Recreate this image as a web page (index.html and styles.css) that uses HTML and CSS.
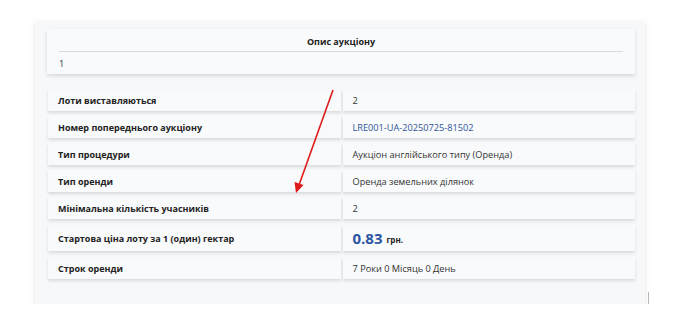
FILE: index.html
```html
<!DOCTYPE html>
<html lang="uk">
  <head>
    <meta charset="UTF-8" />
    <meta name="viewport" content="width=device-width, initial-scale=1.0" />
    <title>Опис аукціону</title>
    <link rel="stylesheet" href="styles.css">
  </head>

  <body>
    <div class="page">
      <div class="panel">
        <div class="desc_card">
          <div class="desc_title">Опис аукціону</div>
          <div class="desc_text">1</div>
        </div>

        <div class="info_table">
          <div class="row">
            <div class="cell label">Лоти виставляються</div>
            <div class="cell value">2</div>
          </div>
          <div class="row">
            <div class="cell label">Номер попереднього аукціону</div>
            <div class="cell value"><a class="link" href="#">LRE001-UA-20250725-81502</a></div>
          </div>
          <div class="row">
            <div class="cell label">Тип процедури</div>
            <div class="cell value">Аукціон англійського типу (Оренда)</div>
          </div>
          <div class="row">
            <div class="cell label">Тип оренди</div>
            <div class="cell value">Оренда земельних ділянок</div>
          </div>
          <div class="row">
            <div class="cell label">Мінімальна кількість учасників</div>
            <div class="cell value">2</div>
          </div>
          <div class="row row_price">
            <div class="cell label">Стартова ціна лоту за 1 (один) гектар</div>
            <div class="cell value"><span class="price">0.83</span> <span class="currency">грн.</span></div>
          </div>
          <div class="row">
            <div class="cell label">Строк оренди</div>
            <div class="cell value">7 Роки 0 Місяць 0 День</div>
          </div>
        </div>

        <svg class="arrow" width="60" height="120" viewBox="0 0 60 120">
          <line x1="53" y1="5" x2="19" y2="100" stroke="#e01b1b" stroke-width="1.6" />
          <polygon points="16,108 14.5,97 23.5,100" fill="#e01b1b" />
        </svg>
      </div>
      <div class="edge_line"></div>
    </div>
  </body>
</html>
```

FILE: styles.css
```css
body {
  margin: 0;
  background-color: #ffffff;
  font-family: "Open Sans", "Noto Sans", sans-serif;
  color: #2b2b2b;
}

.page {
  display: flex;
  align-items: flex-end;
  padding: 22px 0 0 35px;
}

.panel {
  position: relative;
  width: 588px;
  height: 275px;
  padding: 7px 10px 0 12px;
  background-color: #f7f8f9;
  box-shadow: 0 1px 5px rgba(0, 0, 0, 0.12);
}

.edge_line {
  width: 1px;
  height: 15px;
  margin: 0 0 -3px 3px;
  background-color: #b9b9b9;
}

.desc_card {
  height: 45px;
  padding: 0 12px;
  background-color: #f9fafb;
  box-shadow: 0 2px 4px rgba(0, 0, 0, 0.13);
}

.desc_title {
  padding-top: 6px;
  padding-bottom: 3px;
  text-align: center;
  font-size: 9px;
  font-weight: 700;
  color: #222;
  border-bottom: 1px solid #d9dadc;
}

.desc_text {
  padding-top: 5px;
  font-size: 9.2px;
  color: #333;
}

.info_table {
  display: flex;
  flex-direction: column;
  gap: 5px;
  margin-top: 15px;
  padding-left: 1px;
}

.row {
  display: grid;
  grid-template-columns: 1fr 1fr;
  column-gap: 2px;
  height: 22px;
}

.row_price {
  height: 26px;
  margin-top: 1px;
  margin-bottom: 1px;
}

.cell {
  display: flex;
  align-items: center;
  padding-left: 10px;
  font-size: 9.2px;
  background-color: #f9fafb;
  box-shadow: 0 2px 3px rgba(0, 0, 0, 0.12);
}

.label {
  font-size: 9px;
  font-weight: 700;
  color: #222;
}

.value {
  color: #333;
}

.link {
  color: #2f5597;
  text-decoration: none;
}

.price {
  font-size: 15px;
  font-weight: 700;
  color: #2b55a3;
}

.currency {
  margin-left: 4px;
  margin-top: 3px;
  font-size: 8px;
  font-weight: 700;
  color: #222;
}

.arrow {
  position: absolute;
  left: 245px;
  top: 63px;
}
```
